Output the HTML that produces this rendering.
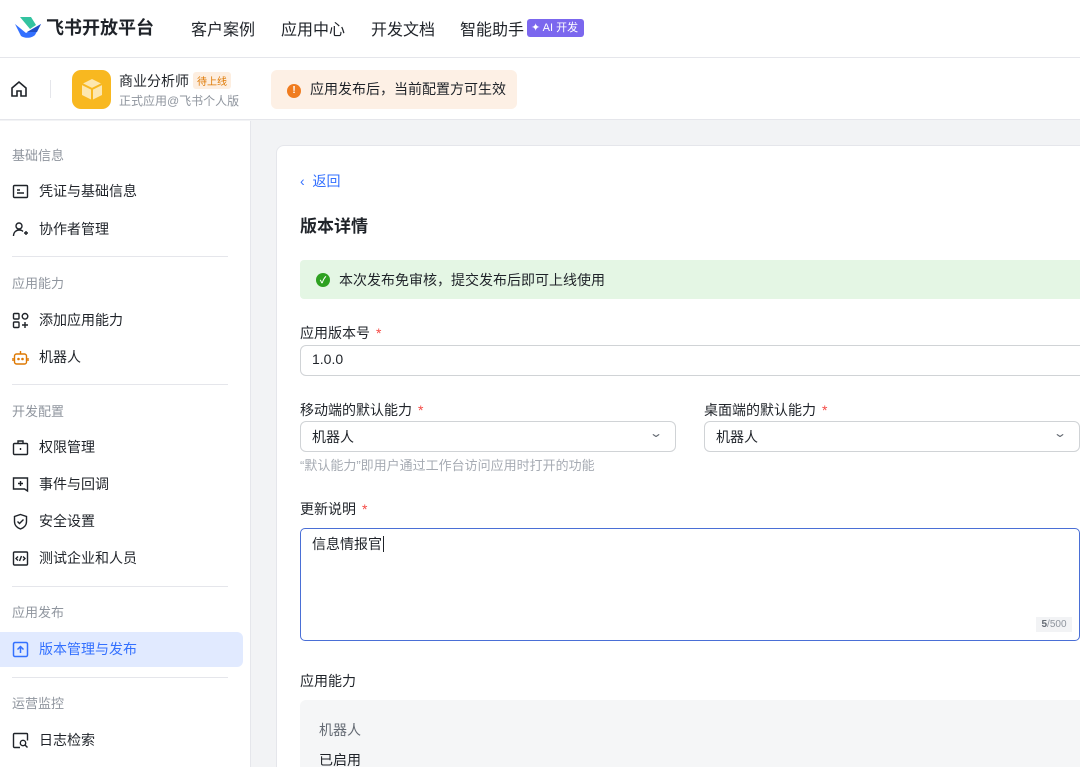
<!DOCTYPE html>
<html style="width:1080px;height:767px;overflow:hidden"><head><meta charset="utf-8"><style>
*{margin:0;padding:0;box-sizing:border-box}
body{width:1080px;height:767px;overflow:hidden;background:#f2f3f5;font-family:"Liberation Sans","Noto Sans CJK SC",sans-serif;color:#1f2329;position:relative}
.a{position:absolute}
.hdr{left:0;top:0;width:1080px;height:58px;background:#fff;border-bottom:1px solid #e5e6eb}
.nav{top:16px;font-size:16px;color:#1f2329}
.bar2{left:0;top:58px;width:1080px;height:62px;background:#fff;border-bottom:1px solid #e5e6eb}
.side{left:0;top:121px;width:251px;height:646px;background:#fff;border-right:1px solid #e5e6eb}
.sec{left:12px;font-size:13px;color:#8f959e}
.it{left:39px;font-size:14px;color:#1f2329}
.ic{left:12px;width:17px;height:17px}
.dv{left:12px;width:216px;height:1px;background:#e5e6eb}
.card{left:276px;top:145px;width:830px;height:630px;background:#fff;border:1px solid #e5e6eb;border-radius:8px}
.lbl{font-size:14px;color:#1f2329}
.lbl i{color:#f54a45;font-style:normal;margin-left:6px}
.inp{height:31px;border:1px solid #d0d3d6;border-radius:6px;background:#fff;font-size:14px;padding:5px 11px}
</style></head><body>
<div class="a hdr"></div>
<svg class="a" style="left:14px;top:15px" width="28" height="24" viewBox="0 0 28 24"><path d="M6 2h11l5 8-6 4z" fill="#33c3a0"/><path d="M1 9l11 9 15-9-6 11c-3 3-9 4-14 1z" fill="#3370ff"/><path d="M13 17l14-8-4 8z" fill="#1f4ec8"/></svg>
<div class="a" style="left:46px;top:14px;font-size:18px;font-weight:bold">飞书开放平台</div>
<div class="a nav" style="left:191px">客户案例</div>
<div class="a nav" style="left:281px">应用中心</div>
<div class="a nav" style="left:371px">开发文档</div>
<div class="a nav" style="left:460px">智能助手</div>
<div class="a" style="left:527px;top:19px;width:57px;height:18px;background:#7b67ee;border-radius:3px;color:#fff;font-size:11px;line-height:18px;padding-left:4px">✦ AI 开发</div>
<div class="a bar2"></div>
<svg class="a" style="left:10px;top:80px" width="18" height="18" viewBox="0 0 18 18" fill="none" stroke="#1f2329" stroke-width="1.6"><path d="M2 8L9 2l7 6v8H11v-5H7v5H2z"/></svg>
<div class="a" style="left:50px;top:80px;width:1px;height:18px;background:#e5e6eb"></div>
<div class="a" style="left:72px;top:70px;width:39px;height:39px;border-radius:9px;background:#f8b820"></div>
<svg class="a" style="left:80px;top:77px" width="24" height="25" viewBox="0 0 24 25"><path d="M12 2l10 5v11l-10 5-10-5V7z" fill="#fde7b0"/><path d="M12 12l10-5M12 12L2 7M12 12v11" stroke="#f8b820" stroke-width="2"/></svg>
<div class="a" style="left:119px;top:71px;font-size:14px">商业分析师</div>
<div class="a" style="left:193px;top:72px;font-size:10px;color:#de7802;background:#fdeee0;padding:1px 4px;border-radius:3px">待上线</div>
<div class="a" style="left:119px;top:92px;font-size:12px;color:#8f959e">正式应用@飞书个人版</div>
<div class="a" style="left:271px;top:70px;width:246px;height:39px;background:#fdf0e5;border-radius:6px"></div>
<div class="a" style="left:287px;top:84px;width:14px;height:14px;border-radius:50%;background:#f07c1f;color:#fff;font-size:10px;text-align:center;line-height:14px;font-weight:bold">!</div>
<div class="a" style="left:310px;top:79px;font-size:14px">应用发布后，当前配置方可生效</div>

<div class="a side"></div>
<div class="a sec" style="top:145px">基础信息</div>
<svg class="a ic" style="top:183px" viewBox="0 0 17 17" fill="none" stroke="#1f2329" stroke-width="1.4"><rect x="1.5" y="2.5" width="14" height="12" rx="1"/><path d="M5 7h3M5 10h7"/></svg>
<div class="a it" style="top:181px">凭证与基础信息</div>
<svg class="a ic" style="top:221px" viewBox="0 0 17 17" fill="none" stroke="#1f2329" stroke-width="1.4"><circle cx="7" cy="5" r="3"/><path d="M1.5 15c0-4 3-6 5.5-6s3 .5 4 1.5M12 12h4M14 10v4"/></svg>
<div class="a it" style="top:219px">协作者管理</div>
<div class="a dv" style="top:256px"></div>
<div class="a sec" style="top:273px">应用能力</div>
<svg class="a ic" style="top:312px" viewBox="0 0 17 17" fill="none" stroke="#1f2329" stroke-width="1.4"><rect x="1.5" y="1.5" width="5.5" height="5.5" rx="1"/><rect x="1.5" y="10" width="5.5" height="5.5" rx="1"/><circle cx="13" cy="4.3" r="2.8"/><path d="M10 13h6M13 10v6"/></svg>
<div class="a it" style="top:310px">添加应用能力</div>
<svg class="a ic" style="top:349px" viewBox="0 0 17 17" fill="none" stroke="#de7802" stroke-width="1.4"><rect x="2.5" y="5" width="12" height="10" rx="2"/><path d="M8.5 5V2M1 9v3M16 9v3"/><circle cx="6.5" cy="10" r=".6" fill="#de7802"/><circle cx="10.5" cy="10" r=".6" fill="#de7802"/></svg>
<div class="a it" style="top:347px">机器人</div>
<div class="a dv" style="top:384px"></div>
<div class="a sec" style="top:401px">开发配置</div>
<svg class="a ic" style="top:439px" viewBox="0 0 17 17" fill="none" stroke="#1f2329" stroke-width="1.4"><rect x="1.5" y="4.5" width="14" height="11" rx="1"/><path d="M6 4.5V2h5v2.5M8.5 9v2"/></svg>
<div class="a it" style="top:437px">权限管理</div>
<svg class="a ic" style="top:476px" viewBox="0 0 17 17" fill="none" stroke="#1f2329" stroke-width="1.4"><path d="M1.5 2h14v13l-3-2h-11z"/><path d="M6 7.5h5M8.5 5v5"/></svg>
<div class="a it" style="top:474px">事件与回调</div>
<svg class="a ic" style="top:513px" viewBox="0 0 17 17" fill="none" stroke="#1f2329" stroke-width="1.4"><path d="M8.5 1.5l6 2v5c0 4-3 6.5-6 7.5-3-1-6-3.5-6-7.5v-5z"/><path d="M5.5 8.5l2 2 4-4"/></svg>
<div class="a it" style="top:511px">安全设置</div>
<svg class="a ic" style="top:550px" viewBox="0 0 17 17" fill="none" stroke="#1f2329" stroke-width="1.4"><rect x="1.5" y="2" width="14" height="13" rx="1"/><path d="M6 6.5l-2 2 2 2M11 6.5l2 2-2 2M9.5 6l-2 5"/></svg>
<div class="a it" style="top:548px">测试企业和人员</div>
<div class="a dv" style="top:586px"></div>
<div class="a sec" style="top:602px">应用发布</div>
<div class="a" style="left:0;top:632px;width:243px;height:35px;background:#e1eaff;border-radius:0 6px 6px 0"></div>
<svg class="a ic" style="top:641px" viewBox="0 0 17 17" fill="none" stroke="#3370ff" stroke-width="1.5"><rect x="1.5" y="1.5" width="14" height="14" rx="1.5"/><path d="M8.5 12V5.5M5.5 8.5l3-3 3 3"/></svg>
<div class="a it" style="top:639px;color:#3370ff">版本管理与发布</div>
<div class="a dv" style="top:677px"></div>
<div class="a sec" style="top:693px">运营监控</div>
<svg class="a ic" style="top:732px" viewBox="0 0 17 17" fill="none" stroke="#1f2329" stroke-width="1.4"><path d="M8 15.5H2.5a1 1 0 01-1-1v-12a1 1 0 011-1h12a1 1 0 011 1v6"/><circle cx="11" cy="11" r="2.7"/><path d="M13 13l2.5 2.5"/></svg>
<div class="a it" style="top:730px">日志检索</div>

<div class="a card"></div>
<div class="a" style="left:300px;top:171px;font-size:14px;color:#3370ff">‹&nbsp; 返回</div>
<div class="a" style="left:300px;top:212px;font-size:17px;font-weight:bold">版本详情</div>
<div class="a" style="left:300px;top:260px;width:790px;height:39px;background:#e4f6e4;border-radius:4px"></div>
<div class="a" style="left:316px;top:273px;width:14px;height:14px;border-radius:50%;background:#2ea121;color:#fff;font-size:9px;text-align:center;line-height:14px;font-weight:bold">✓</div>
<div class="a" style="left:339px;top:270px;font-size:14px">本次发布免审核，提交发布后即可上线使用</div>
<div class="a lbl" style="left:300px;top:323px">应用版本号<i>*</i></div>
<div class="a inp" style="left:300px;top:345px;width:790px">1.0.0</div>
<div class="a lbl" style="left:300px;top:400px">移动端的默认能力<i>*</i></div>
<div class="a inp" style="left:300px;top:421px;width:376px">机器人</div>
<div class="a" style="left:651px;top:426px;font-size:12px;color:#646a73;transform:scaleX(1.4)">⌄</div>
<div class="a lbl" style="left:704px;top:400px">桌面端的默认能力<i>*</i></div>
<div class="a inp" style="left:704px;top:421px;width:376px">机器人</div>
<div class="a" style="left:1055px;top:426px;font-size:12px;color:#646a73;transform:scaleX(1.4)">⌄</div>
<div class="a" style="left:300px;top:455px;font-size:13px;color:#a6abb3">“默认能力”即用户通过工作台访问应用时打开的功能</div>
<div class="a lbl" style="left:300px;top:499px">更新说明<i>*</i></div>
<div class="a" style="left:300px;top:528px;width:780px;height:113px;border:1.5px solid #4a6fd6;border-radius:5px;font-size:14px;padding:5px 11px">信息情报官<span style="border-left:1px solid #1f2329;margin-left:1px"></span></div>
<div class="a" style="left:1036px;top:617px;width:36px;height:15px;background:#f2f3f5;font-size:10px;color:#8f959e;text-align:center;line-height:15px"><b style="color:#646a73">5</b>/500</div>
<div class="a lbl" style="left:300px;top:671px">应用能力</div>
<div class="a" style="left:300px;top:700px;width:790px;height:80px;background:#f5f6f7;border-radius:6px"></div>
<div class="a" style="left:319px;top:720px;font-size:14px;color:#646a73">机器人</div>
<div class="a" style="left:319px;top:750px;font-size:14px">已启用</div>
</body></html>
